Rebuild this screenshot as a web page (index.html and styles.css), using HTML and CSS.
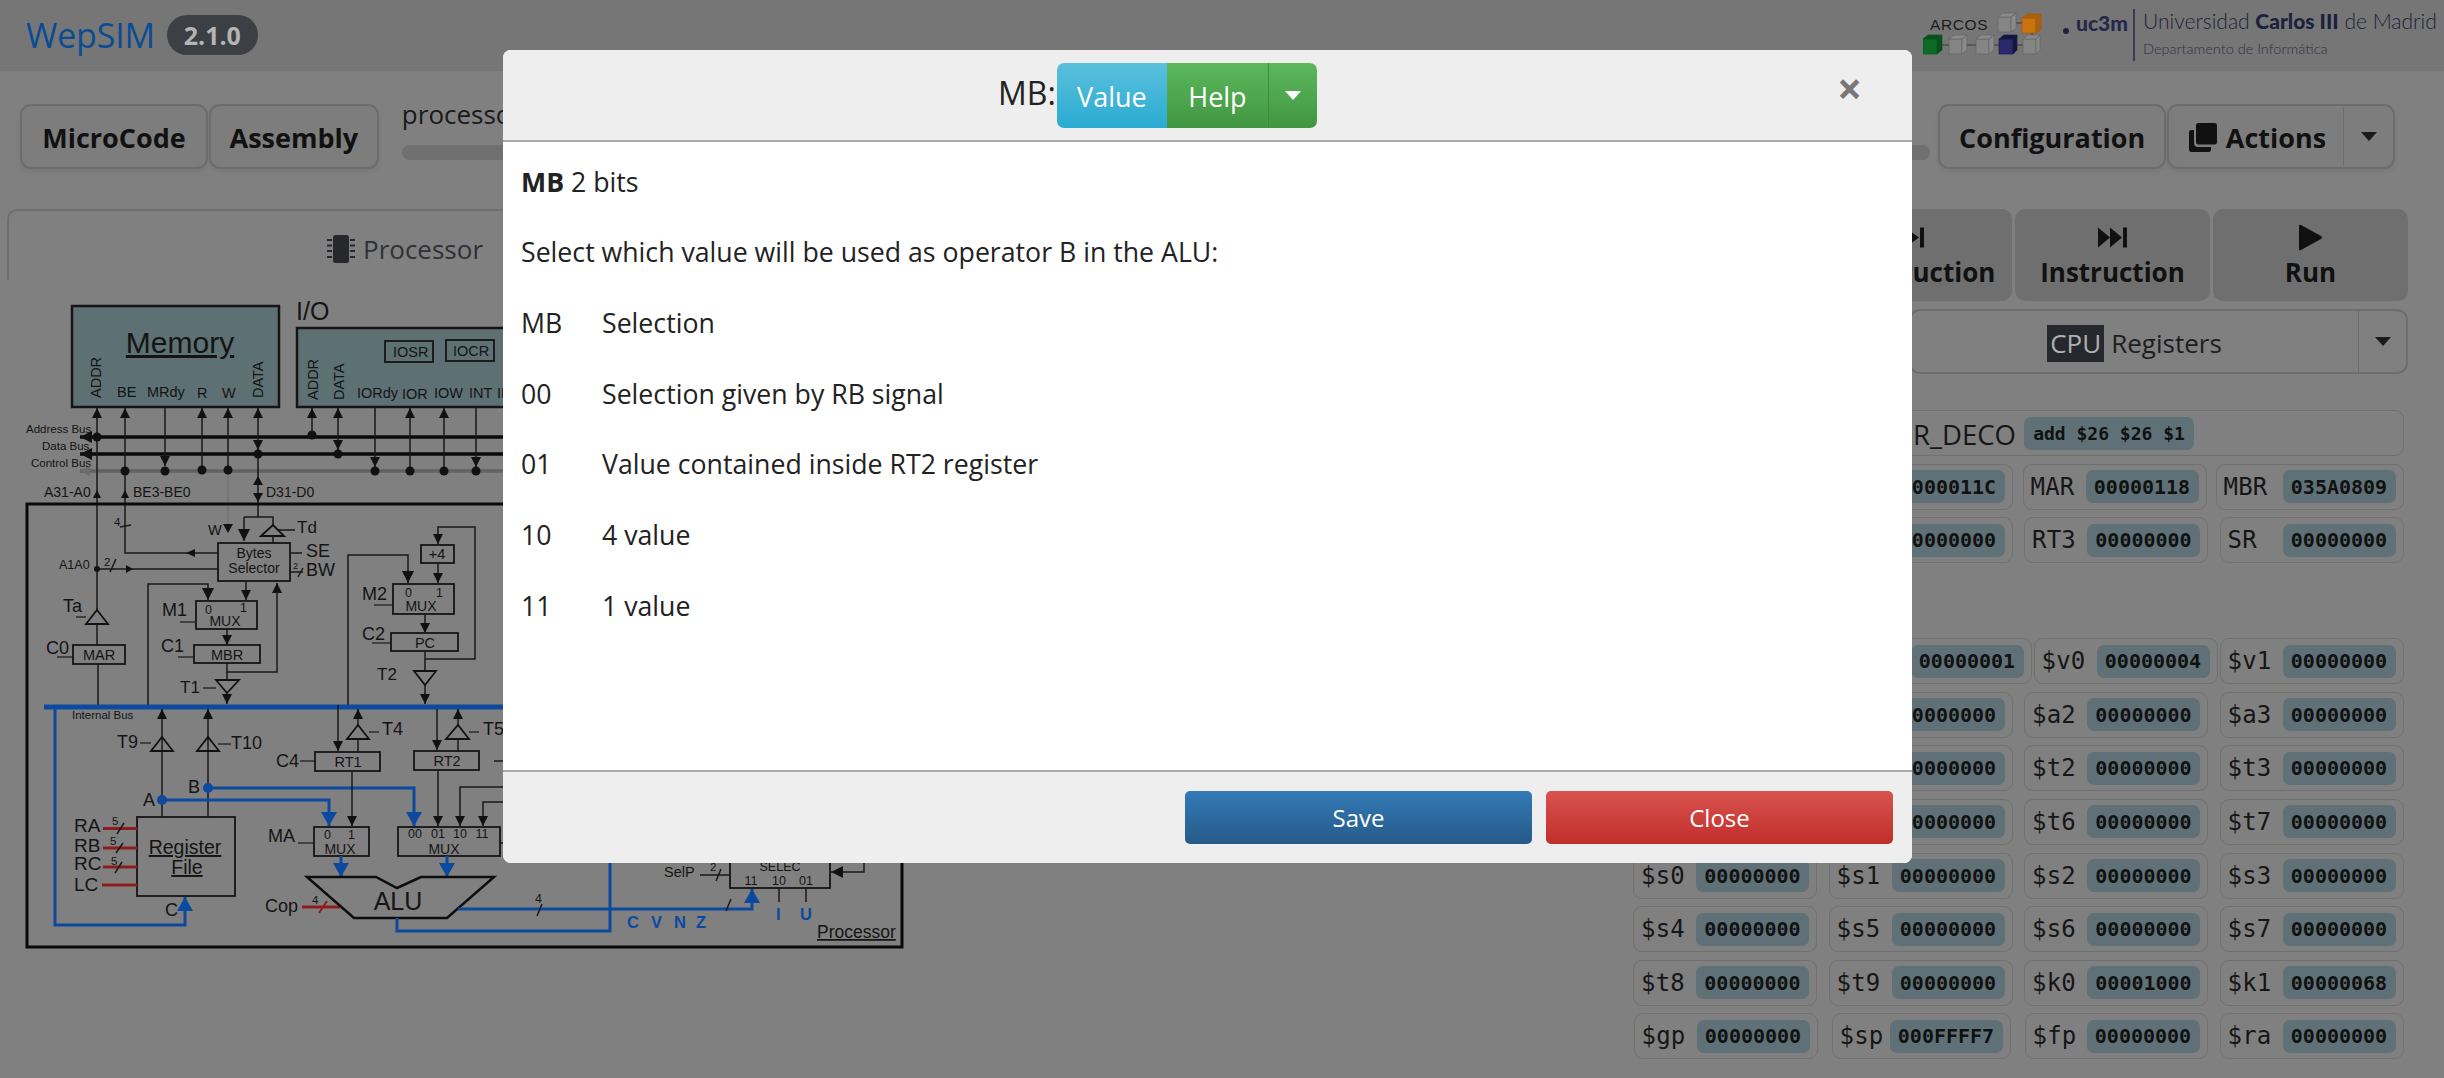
FILE: index.html
```html
<!DOCTYPE html>
<html lang="en">
<head>
<meta charset="utf-8">
<title>WepSIM</title>
<link rel="stylesheet" href="styles.css">
</head>
<body>
<div class="app">
  <header class="topbar">
    <div class="brand"><span class="brand-name">WepSIM</span><span class="version">2.1.0</span></div>
    <div class="logos">
      <svg class="arcos" viewBox="0 0 124 60" width="124" height="60">
        <text class="arcos-text" x="7" y="28">ARCOS</text>
        <g class="cube-links"><path d="M93 21h6M19 43h7M44 43h9M71 43h5M94 43h6M109 31v4"/></g>
        <g class="cube c-gray"><rect x="75" y="15" width="13" height="15"/><path d="M75 15l5-4h13l-5 4zM88 15l5-4v15l-5 4z"/></g>
        <g class="cube c-orange"><rect x="99" y="16" width="14" height="15"/><path d="M99 16l5-4h14l-5 4zM113 16l5-4v15l-5 4z"/></g>
        <g class="cube c-green"><rect x="0" y="37" width="14" height="15"/><path d="M0 37l5-4h14l-5 4zM14 37l5-4v15l-5 4z"/></g>
        <g class="cube c-gray"><rect x="26" y="37" width="13" height="15"/><path d="M26 37l5-4h13l-5 4zM39 37l5-4v15l-5 4z"/></g>
        <g class="cube c-gray"><rect x="53" y="37" width="13" height="15"/><path d="M53 37l5-4h13l-5 4zM66 37l5-4v15l-5 4z"/></g>
        <g class="cube c-navy"><rect x="76" y="37" width="14" height="15"/><path d="M76 37l5-4h13l-4 4zM90 37l4-4v15l-4 4z"/></g>
        <g class="cube c-gray"><rect x="100" y="37" width="13" height="15"/><path d="M100 37l5-4h12l-4 4zM113 37l4-4v15l-4 4z"/></g>
      </svg>
      <span class="uc-dot"></span>
      <span class="uc3m">uc3m</span>
      <span class="uc-rule"></span>
      <div class="uni">
        <div class="uni-name">Universidad <b>Carlos III</b> de Madrid</div>
        <div class="uni-dept">Departamento de Informática</div>
      </div>
    </div>
  </header>

  <div class="toolbar">
    <button class="btn">MicroCode</button>
    <button class="btn btn-asm">Assembly</button>
    <div class="progress-wrap">
      <div class="progress-label">processor</div>
      <div class="progress"></div>
    </div>
    <button class="btn btn-conf">Configuration</button>
    <div class="btn split">
      <span class="split-main">
        <svg class="icon-copy" viewBox="0 0 28 29" width="28" height="29"><path d="M7 2.500a2.500 2.500 0 0 1 2.500-2.500H25.500a2.500 2.500 0 0 1 2.500 2.500V19a2.500 2.500 0 0 1-2.500 2.500H9.500A2.500 2.500 0 0 1 7 19z"/><path d="M0 9.500A2.500 2.500 0 0 1 2.500 7H5V20a4 4 0 0 0 4 4h13v2.500a2.500 2.500 0 0 1-2.500 2.500H2.500A2.500 2.500 0 0 1 0 26.500z"/></svg>
        Actions
      </span>
      <span class="split-caret"><i class="caret"></i></span>
    </div>
  </div>

  <div class="workspace">
    <section class="left">
      <div class="tab">
        <svg class="icon-chip" viewBox="0 0 28 28" width="28" height="28"><rect x="6" y="0" width="16" height="28" rx="2.500"/><path class="pins" d="M0 5h5M0 10.500h5M0 16h5M0 22h5M23 5h5M23 10.500h5M23 16h5M23 22h5"/></svg>
        <span>Processor</span>
      </div>
      <svg class="diagram" viewBox="0 280 910 680" width="910" height="680">
        <defs>
          <marker id="ah" class="mk" markerUnits="userSpaceOnUse" markerWidth="13" markerHeight="12" refX="12" refY="6" orient="auto-start-reverse"><path d="M0 0L12 6L0 12z"/></marker>
          <marker id="as" class="mk" markerUnits="userSpaceOnUse" markerWidth="11" markerHeight="10" refX="10" refY="5" orient="auto-start-reverse"><path d="M0 0L10 5L0 10z"/></marker>
          <marker id="ab" class="mkb" markerUnits="userSpaceOnUse" markerWidth="15" markerHeight="16" refX="14" refY="8" orient="auto"><path d="M0 0L14 8L0 16z"/></marker>
        </defs>

        <rect class="box teal thick" x="72" y="306" width="207" height="101"/>
        <rect class="box teal thick" x="297" y="328" width="260" height="79"/>
        <rect class="box teal" x="385" y="341" width="48" height="21"/>
        <rect class="box teal" x="446" y="340" width="48" height="21"/>
        <text class="t s30 ul" x="180" y="353" text-anchor="middle">Memory</text>
        <text class="t s24" x="296" y="320">I/O</text>
        <text class="t s14" x="393" y="357">IOSR</text>
        <text class="t s14" x="453" y="356">IOCR</text>
        <text class="t s14" transform="translate(101 398) rotate(-90)">ADDR</text>
        <text class="t s14" transform="translate(263 398) rotate(-90)">DATA</text>
        <text class="t s14" transform="translate(318 400) rotate(-90)">ADDR</text>
        <text class="t s14" transform="translate(344 400) rotate(-90)">DATA</text>
        <text class="t s14" x="117" y="397">BE</text>
        <text class="t s14" x="147" y="397">MRdy</text>
        <text class="t s14" x="197" y="398">R</text>
        <text class="t s14" x="222" y="398">W</text>
        <text class="t s14" x="357" y="398">IORdy</text>
        <text class="t s14" x="402" y="399">IOR</text>
        <text class="t s14" x="434" y="398">IOW</text>
        <text class="t s14" x="469" y="398">INT</text>
        <text class="t s14" x="497" y="398">IN</text>

        <text class="t s10" x="26" y="433">Address Bus</text>
        <text class="t s10" x="42" y="450">Data Bus</text>
        <text class="t s10" x="31" y="467">Control Bus</text>
        <path class="bus" marker-start="url(#ah)" d="M80 437H520"/>
        <path class="bus" marker-start="url(#ah)" d="M80 454H520"/>
        <path class="bus gray" d="M80 471H520"/>
        <path class="bus-head" d="M80 471l10-5v10z"/>

        <path class="l" marker-start="url(#as)" d="M97 408V610"/>
        <path class="l" marker-start="url(#as)" d="M125 408V553H218"/>
        <path class="l" marker-end="url(#as)" d="M165 408V466"/>
        <path class="l" marker-start="url(#as)" d="M202 408V471"/>
        <path class="l" marker-start="url(#as)" d="M228 408V471"/>
        <path class="l faint" d="M228 471V528"/>
        <path class="l" marker-start="url(#as)" marker-end="url(#as)" d="M258 408V450"/>
        <path class="l" d="M258 450V517"/>
        <path class="l" marker-start="url(#as)" d="M312 408V437"/>
        <path class="l" marker-start="url(#as)" marker-end="url(#as)" d="M338 408V450"/>
        <path class="l" marker-end="url(#as)" d="M375 407V467"/>
        <path class="l" marker-start="url(#as)" d="M410 408V471"/>
        <path class="l" marker-start="url(#as)" d="M444 408V471"/>
        <path class="l" marker-end="url(#as)" d="M476 407V467"/>
        <g class="dots">
          <circle cx="97" cy="437" r="4.500"/><circle cx="312" cy="435" r="4.500"/><circle cx="258" cy="454" r="4.500"/><circle cx="338" cy="454" r="4.500"/>
          <circle cx="125" cy="471" r="4.500"/><circle cx="165" cy="471" r="4.500"/><circle cx="202" cy="470" r="4.500"/><circle cx="228" cy="470" r="4.500"/>
          <circle cx="375" cy="471" r="4.500"/><circle cx="410" cy="471" r="4.500"/><circle cx="444" cy="471" r="4.500"/><circle cx="476" cy="471" r="4.500"/>
          <circle cx="97" cy="569" r="3"/>
        </g>
        <text class="t s13" x="44" y="497">A31-A0</text>
        <text class="t s13" x="133" y="497">BE3-BE0</text>
        <text class="t s13" x="266" y="497">D31-D0</text>
        <path class="l-none ah-fill" d="M97 490l-4 8h8zM125 490l-4 8h8zM258 476l-5 9h10zM258 502l-5-9h10z"/>

        <rect class="frame" x="27" y="504" width="875" height="443"/>

        <path class="l" d="M244 517H273V525"/>
        <path class="l" marker-end="url(#ah)" d="M244 517V541"/>
        <path class="tri" d="M261 536L273 525L284 536z"/>
        <path class="l" d="M273 536V543M278 530H295M290 553H302"/>
        <text class="t s15" x="297" y="533">Td</text>
        <text class="t s14" x="208" y="535">W</text>
        <path class="ah-fill" d="M223 524h10l-5 9z"/>
        <rect class="box" x="218" y="543" width="72" height="38"/>
        <text class="t s13" x="254" y="558" text-anchor="middle">Bytes</text>
        <text class="t s13" x="254" y="573" text-anchor="middle">Selector</text>
        <text class="t s16" x="306" y="557">SE</text>
        <text class="t s16" x="306" y="576">BW</text>
        <text class="t s9" x="293" y="569">2</text>
        <path class="l" d="M290 572H303M298 577L303 568"/>
        <path class="ah-fill" d="M186 553l9-4v8z"/>
        <text class="t s12" x="59" y="569">A1A0</text>
        <path class="l" d="M97 569H218M110 572L116 559M120 527L131 525"/>
        <text class="t s10" x="104" y="566">2</text>
        <text class="t s10" x="114" y="526">4</text>
        <path class="ah-fill" d="M133 569l-7-4v8z"/>

        <path class="l" marker-end="url(#ah)" d="M148 705V584H208V600"/>
        <path class="l" marker-end="url(#as)" d="M246 581V600"/>
        <rect class="box" x="196" y="601" width="61" height="28"/>
        <text class="t s12" x="205" y="614">0</text><text class="t s12" x="240" y="612">1</text>
        <text class="t s13" x="225" y="626" text-anchor="middle">MUX</text>
        <text class="t s16" x="162" y="616">M1</text>
        <path class="l gl" d="M180 622H196M178 657H194M57 657H73M76 617H86M203 688H216M374 605H393M372 643H391M140 743H151M218 744H231M369 732H379M469 732H479M300 761H315M298 843H314"/>
        <path class="l" marker-end="url(#as)" d="M227 629V645"/>
        <rect class="box" x="194" y="645" width="66" height="18"/>
        <text class="t s14" x="227" y="660" text-anchor="middle">MBR</text>
        <text class="t s16" x="161" y="652">C1</text>
        <path class="l" marker-end="url(#as)" d="M227 663V672H277V583"/>
        <path class="l" d="M227 672V680"/>
        <path class="tri" d="M216 680H239L227 693z"/>
        <text class="t s15" x="180" y="693">T1</text>
        <path class="l" marker-end="url(#as)" d="M227 693V704"/>

        <path class="tri" d="M86 624L97 610L108 624z"/>
        <text class="t s16" x="63" y="612">Ta</text>
        <path class="l" d="M97 624V645M98 664V705"/>
        <rect class="box" x="73" y="645" width="52" height="19"/>
        <text class="t s14" x="99" y="660" text-anchor="middle">MAR</text>
        <text class="t s16" x="46" y="654">C0</text>

        <rect class="box" x="421" y="545" width="33" height="18"/>
        <text class="t s14" x="437" y="559" text-anchor="middle">+4</text>
        <path class="l" marker-end="url(#as)" d="M425 659H475V527H438V544"/>
        <path class="l" marker-end="url(#as)" d="M438 563V583"/>
        <path class="l" marker-end="url(#ah)" d="M348 705V555H408V583"/>
        <rect class="box" x="393" y="584" width="61" height="30"/>
        <text class="t s12" x="405" y="597">0</text><text class="t s12" x="436" y="597">1</text>
        <text class="t s13" x="421" y="611" text-anchor="middle">MUX</text>
        <text class="t s16" x="362" y="600">M2</text>
        <path class="l" marker-end="url(#as)" d="M425 614V633"/>
        <rect class="box" x="391" y="633" width="67" height="18"/>
        <text class="t s14" x="425" y="648" text-anchor="middle">PC</text>
        <text class="t s16" x="362" y="640">C2</text>
        <path class="l" d="M425 651V671"/>
        <path class="tri" d="M414 671H436L425 685z"/>
        <text class="t s15" x="377" y="680">T2</text>
        <path class="l" marker-end="url(#as)" d="M425 685V704"/>

        <path class="bluel wide" d="M44 707H520"/>
        <path class="bluel" marker-end="url(#ab)" d="M55 707V925H185V897"/>
        <text class="t s11" x="72" y="719">Internal Bus</text>
        <text class="t s16" x="165" y="916">C</text>

        <path class="l" marker-end="url(#as)" d="M162 817V709"/>
        <path class="l" marker-end="url(#as)" d="M208 817V709"/>
        <path class="tri" d="M151 751L162 737L173 751z"/>
        <path class="tri" d="M197 751L208 737L219 751z"/>
        <text class="t s16" x="117" y="748">T9</text>
        <text class="t s16" x="231" y="749">T10</text>
        <path class="bluel" marker-end="url(#ab)" d="M162 800H329V826"/>
        <path class="bluel" marker-end="url(#ab)" d="M208 788H414V826"/>
        <circle class="bdot" cx="162" cy="800" r="5"/>
        <circle class="bdot" cx="208" cy="788" r="5"/>
        <text class="t s16" x="143" y="806">A</text>
        <text class="t s16" x="188" y="793">B</text>
        <rect class="box" x="137" y="817" width="98" height="79"/>
        <text class="t s19 ul" x="185" y="854" text-anchor="middle">Register</text>
        <text class="t s19 ul" x="187" y="874" text-anchor="middle">File</text>
        <text class="t s17" x="74" y="832">RA</text>
        <text class="t s17" x="74" y="852">RB</text>
        <text class="t s17" x="74" y="870">RC</text>
        <text class="t s17" x="74" y="891">LC</text>
        <path class="redl" d="M103 828.500H137M103 848H137M103 867H137M102 885H137M302 907H340"/>
        <path class="l" d="M117 834L124 823M116 853L123 843M115 873L122 862"/>
        <path class="redl thin" d="M319 913L327 901"/>
        <text class="t s11" x="112" y="825">5</text>
        <text class="t s11" x="110" y="845">5</text>
        <text class="t s11" x="111" y="865">5</text>
        <text class="t s11" x="312" y="904">4</text>

        <rect class="box" x="315" y="752" width="65" height="19"/>
        <text class="t s14" x="348" y="767" text-anchor="middle">RT1</text>
        <text class="t s16" x="276" y="767">C4</text>
        <path class="l" marker-end="url(#as)" d="M338 705V751"/>
        <path class="l" d="M358 739V752"/>
        <path class="tri" d="M347 739L358 725L369 739z"/>
        <path class="l" marker-end="url(#as)" d="M358 725V709"/>
        <text class="t s16" x="382" y="735">T4</text>
        <path class="l" marker-end="url(#as)" d="M352 771V826"/>

        <rect class="box" x="414" y="751" width="65" height="19"/>
        <text class="t s14" x="447" y="766" text-anchor="middle">RT2</text>
        <path class="l" marker-end="url(#as)" d="M437 709V750"/>
        <path class="l" d="M458 739V751"/>
        <path class="tri" d="M446 739L458 725L469 739z"/>
        <path class="l" marker-end="url(#as)" d="M458 725V709"/>
        <text class="t s16" x="483" y="735">T5</text>
        <path class="l" d="M494 761H503"/>
        <path class="l" marker-end="url(#as)" d="M438 771V826"/>
        <path class="l" marker-end="url(#as)" d="M503 787H460V826"/>
        <path class="l" marker-end="url(#as)" d="M503 802H483V826"/>

        <rect class="box" x="314" y="827" width="55" height="29"/>
        <text class="t s12" x="324" y="839">0</text><text class="t s12" x="348" y="839">1</text>
        <text class="t s13" x="340" y="854" text-anchor="middle">MUX</text>
        <text class="t s16" x="268" y="842">MA</text>
        <rect class="box" x="398" y="827" width="102" height="29"/>
        <text class="t s12" x="415" y="838" text-anchor="middle">00</text>
        <text class="t s12" x="438" y="838" text-anchor="middle">01</text>
        <text class="t s12" x="460" y="838" text-anchor="middle">10</text>
        <text class="t s12" x="482" y="838" text-anchor="middle">11</text>
        <text class="t s13" x="444" y="854" text-anchor="middle">MUX</text>
        <path class="l" d="M500 843H520"/>
        <path class="bluel" marker-end="url(#ab)" d="M341 856V877"/>
        <path class="bluel" marker-end="url(#ab)" d="M447 856V877"/>

        <path class="alu" d="M307 877H376L397 888L421 877H494L447 918H354z"/>
        <text class="t s24" x="398" y="910" text-anchor="middle">ALU</text>
        <text class="t s16" x="265" y="912">Cop</text>

        <path class="bluel" d="M397 918V931H610V800"/>
        <path class="bluel" marker-end="url(#ab)" d="M458 909H752V889"/>
        <text class="t s12" x="535" y="903">4</text>
        <path class="l" d="M537 916L542 904M726 911L731 899"/>
        <rect class="box" x="730" y="840" width="100" height="48"/>
        <text class="t s12" x="780" y="871" text-anchor="middle">SELEC</text>
        <text class="t s12" x="751" y="885" text-anchor="middle">11</text>
        <text class="t s12" x="779" y="885" text-anchor="middle">10</text>
        <text class="t s12" x="806" y="885" text-anchor="middle">01</text>
        <text class="t s14" x="664" y="877">SelP</text>
        <text class="t s11" x="710" y="871">2</text>
        <path class="l" d="M700 875H730M716 881L721 869"/>
        <path class="l" marker-end="url(#ah)" d="M864 860V872H831"/>
        <path class="l" d="M779 888V902M806 888V902"/>
        <text class="blue-t" x="776" y="920">I</text>
        <text class="blue-t" x="800" y="920">U</text>
        <text class="blue-t" x="627" y="928">C</text>
        <text class="blue-t" x="651" y="928">V</text>
        <text class="blue-t" x="674" y="928">N</text>
        <text class="blue-t" x="696" y="928">Z</text>
        <text class="t s15b ul" x="817" y="938">Processor</text>
      </svg>
    </section>

    <aside class="right">
      <div class="steps">
        <button class="step">Reset</button>
        <button class="step">
          <svg class="step-icon" viewBox="0 0 20 22" width="20" height="22"><path d="M0 1l14 10L0 21zM15 1h4v20h-4z"/></svg>
          <span>μInstruction</span>
        </button>
        <button class="step">
          <svg class="step-icon" viewBox="0 0 29 22" width="29" height="22"><path d="M0 1l12 10L0 21zM12 1l12 10-12 10zM25 1h4v20h-4z"/></svg>
          <span>Instruction</span>
        </button>
        <button class="step">
          <svg class="step-icon" viewBox="0 0 25 27" width="25" height="27"><path d="M1 2q0-2 2-1l20 11q2 1.500 0 3L3 26q-2 1-2-1z"/></svg>
          <span>Run</span>
        </button>
      </div>
      <div class="select">
        <span class="select-main"><span class="cpu">CPU</span> Registers</span>
        <span class="select-caret"><i class="caret"></i></span>
      </div>
      <div class="regs">
        <div class="chip chip-wide"><span class="lbl lbl-deco">IR_DECO</span><span class="val val-auto">add $26 $26 $1</span></div>
        <div class="row row-ctl1">
          <div class="chip chip-pc"><span class="lbl">PC</span><span class="val">0000011C</span></div>
          <div class="chip"><span class="lbl">MAR</span><span class="val">00000118</span></div>
          <div class="chip chip-mbr"><span class="lbl">MBR</span><span class="val">035A0809</span></div>
        </div>
        <div class="row">
          <div class="chip"><span class="lbl">RT1</span><span class="val">00000000</span></div>
          <div class="chip"><span class="lbl">RT2</span><span class="val">00000000</span></div>
          <div class="chip"><span class="lbl">RT3</span><span class="val">00000000</span></div>
          <div class="chip"><span class="lbl">SR</span><span class="val">00000000</span></div>
        </div>
      </div>
      <div class="regs regs-bank">
        <div class="row row-tight">
          <div class="chip"><span class="lbl">$zero</span><span class="val">00000000</span></div>
          <div class="chip"><span class="lbl">$at</span><span class="val">00000001</span></div>
          <div class="chip"><span class="lbl">$v0</span><span class="val">00000004</span></div>
          <div class="chip"><span class="lbl">$v1</span><span class="val">00000000</span></div>
        </div>
        <div class="row">
          <div class="chip"><span class="lbl">$a0</span><span class="val">00000000</span></div>
          <div class="chip"><span class="lbl">$a1</span><span class="val">00000000</span></div>
          <div class="chip"><span class="lbl">$a2</span><span class="val">00000000</span></div>
          <div class="chip"><span class="lbl">$a3</span><span class="val">00000000</span></div>
        </div>
        <div class="row">
          <div class="chip"><span class="lbl">$t0</span><span class="val">00000000</span></div>
          <div class="chip"><span class="lbl">$t1</span><span class="val">00000000</span></div>
          <div class="chip"><span class="lbl">$t2</span><span class="val">00000000</span></div>
          <div class="chip"><span class="lbl">$t3</span><span class="val">00000000</span></div>
        </div>
        <div class="row">
          <div class="chip"><span class="lbl">$t4</span><span class="val">00000000</span></div>
          <div class="chip"><span class="lbl">$t5</span><span class="val">00000000</span></div>
          <div class="chip"><span class="lbl">$t6</span><span class="val">00000000</span></div>
          <div class="chip"><span class="lbl">$t7</span><span class="val">00000000</span></div>
        </div>
        <div class="row">
          <div class="chip"><span class="lbl">$s0</span><span class="val">00000000</span></div>
          <div class="chip"><span class="lbl">$s1</span><span class="val">00000000</span></div>
          <div class="chip"><span class="lbl">$s2</span><span class="val">00000000</span></div>
          <div class="chip"><span class="lbl">$s3</span><span class="val">00000000</span></div>
        </div>
        <div class="row">
          <div class="chip"><span class="lbl">$s4</span><span class="val">00000000</span></div>
          <div class="chip"><span class="lbl">$s5</span><span class="val">00000000</span></div>
          <div class="chip"><span class="lbl">$s6</span><span class="val">00000000</span></div>
          <div class="chip"><span class="lbl">$s7</span><span class="val">00000000</span></div>
        </div>
        <div class="row">
          <div class="chip"><span class="lbl">$t8</span><span class="val">00000000</span></div>
          <div class="chip"><span class="lbl">$t9</span><span class="val">00000000</span></div>
          <div class="chip"><span class="lbl">$k0</span><span class="val">00001000</span></div>
          <div class="chip"><span class="lbl">$k1</span><span class="val">00000068</span></div>
        </div>
        <div class="row row-last">
          <div class="chip"><span class="lbl">$gp</span><span class="val">00000000</span></div>
          <div class="chip chip-sp"><span class="lbl">$sp</span><span class="val">000FFFF7</span></div>
          <div class="chip chip-fp"><span class="lbl">$fp</span><span class="val">00000000</span></div>
          <div class="chip"><span class="lbl">$ra</span><span class="val">00000000</span></div>
        </div>
      </div>
    </aside>
  </div>

  <div class="modal">
    <div class="modal-head">
      <div class="modal-title">
        <span class="modal-name">MB:</span>
        <div class="mgroup">
          <span class="mbtn m-info">Value</span>
          <span class="mbtn m-ok">Help</span>
          <span class="mbtn m-ok m-drop"><i class="caret caret-w"></i></span>
        </div>
      </div>
      <div class="modal-x">×</div>
    </div>
    <div class="modal-body">
      <p class="line"><b>MB</b> 2 bits</p>
      <p class="line">Select which value will be used as operator B in the ALU:</p>
      <p class="line cols"><span>MB</span><span>Selection</span></p>
      <p class="line cols"><span>00</span><span>Selection given by RB signal</span></p>
      <p class="line cols"><span>01</span><span>Value contained inside RT2 register</span></p>
      <p class="line cols"><span>10</span><span>4 value</span></p>
      <p class="line cols"><span>11</span><span>1 value</span></p>
    </div>
    <div class="modal-foot">
      <button class="fbtn f-save">Save</button>
      <button class="fbtn f-close">Close</button>
    </div>
  </div>
</div>
</body>
</html>
```

FILE: styles.css
```css
* { box-sizing: border-box; }
html, body { margin: 0; padding: 0; }
body { font-family: "Open Sans", "Noto Sans", sans-serif; color: #111; background: #808080; }
button { font-family: inherit; }
.app { position: relative; width: 2444px; height: 1078px; overflow: hidden; background: #808080; }

/* header */
.topbar { height: 71px; background: #767676; display: flex; justify-content: space-between; align-items: center; padding: 0 30px 0 26px; }
.brand { display: flex; align-items: center; gap: 12px; margin-top: -2px; }
.brand-name { font-size: 34px; color: #0a4c94; letter-spacing: -0.2px; }
.version { width: 91px; height: 40px; border-radius: 20px; background: #3c3f44; color: #b4b4b4; font-weight: 700; font-size: 25px; display: flex; align-items: center; justify-content: center; }
.logos { display: flex; align-items: center; }
.arcos { display: block; margin-right: 16px; margin-bottom: 8px; }
.arcos-text { font-family: "Liberation Sans", sans-serif; font-size: 15.500px; fill: #1c1c1c; letter-spacing: .6px; }
.cube-links path { stroke: #4d4d4d; stroke-width: 1.500; fill: none; }
.cube rect, .cube path { stroke-width: .7; }
.c-gray rect { fill: #858585; stroke: #666; } .c-gray path { fill: #8a8a8a; stroke: #666; }
.c-orange rect { fill: #c9730f; stroke: #a55c09; } .c-orange path { fill: #a96010; stroke: #a55c09; }
.c-green rect { fill: #0e6a26; stroke: #0a5a1e; } .c-green path { fill: #0a4e1b; stroke: #0a5a1e; }
.c-navy rect { fill: #29296b; stroke: #1c1c50; } .c-navy path { fill: #14143c; stroke: #1c1c50; }
.uc-dot { width: 6px; height: 6px; border-radius: 50%; background: #1f2040; margin: -10px 7px 0 0; }
.uc3m { font-family: "Lato", sans-serif; font-weight: 900; font-size: 21px; line-height: 26px; color: #26274a; margin-bottom: 26px; width: 57px; }
.uc-rule { width: 2px; height: 52px; background: #383a58; margin-right: 8px; margin-bottom: 2px; }
.uni { display: flex; flex-direction: column; gap: 4px; color: #1e1f3c; font-family: "Lato", sans-serif; margin-bottom: 6px; width: 271px; }
.uni-name { font-size: 21px; font-weight: 300; line-height: 28px; white-space: nowrap; }
.uni-name b { font-weight: 900; }
.uni-dept { font-size: 14.500px; font-weight: 300; line-height: 20px; color: #2e3048; white-space: nowrap; }

/* toolbar */
.toolbar { display: flex; height: 65px; margin-top: 33px; padding-left: 20px; padding-right: 49px; }
.btn { height: 65px; border: 2px solid #6d6d6d; border-radius: 11px; background: #7d7d7d; font-size: 27px; font-weight: 700; color: #111; padding: 2px 0 0; box-shadow: 0 3px 5px rgba(0,0,0,.07); width: 188px; margin-right: 1px; display: flex; align-items: center; justify-content: center; }
.btn-asm { width: 170px; }
.progress-wrap { width: 1529px; margin: 0 8px 0 22px; }
.progress-label { font-size: 26px; line-height: 36px; margin-top: -8px; color: #1a1a1a; }
.progress { height: 15px; border-radius: 8px; background: #707070; margin-top: 13px; }
.btn-conf { width: 228px; }
.split { width: 228px; margin: 0; }
.split-main { flex: 1; display: flex; align-items: center; justify-content: center; gap: 9px; padding-left: 3px; }
.split-caret { width: 50px; height: 100%; margin-top: -2px; border-left: 1px solid #6d6d6d; display: flex; align-items: center; justify-content: center; }
.icon-copy path { fill: #111; }
.caret { display: block; width: 0; height: 0; border-style: solid; border-width: 9px 8px 0; border-color: #1a1a1a transparent transparent; }

/* workspace */
.workspace { display: flex; margin-top: 40px; }
.left { width: 1616px; flex: none; }
.tab { height: 71px; margin-left: 7px; border: 2px solid #6f6f6f; border-bottom: 0; border-radius: 10px 10px 0 0; display: flex; align-items: flex-start; padding: 21px 0 0 318px; gap: 8px; color: #2f3135; font-size: 26px; line-height: 34px; }
.icon-chip { flex: none; margin-top: 3px; }
.icon-chip rect { fill: #26282c; }
.icon-chip .pins { stroke: #26282c; stroke-width: 2; fill: none; }
.diagram { display: block; }

.t { font-family: "Liberation Sans", sans-serif; fill: #141414; }
.s9 { font-size: 9px; } .s10 { font-size: 11.500px; } .s11 { font-size: 11.500px; } .s12 { font-size: 12.500px; }
.s13 { font-size: 14px; } .s14 { font-size: 14.500px; } .s15 { font-size: 17px; } .s15b { font-size: 17.500px; } .s16 { font-size: 18px; }
.s17 { font-size: 19px; } .s19 { font-size: 19.500px; } .s24 { font-size: 25px; } .s30 { font-size: 30px; }
.ul { text-decoration: underline; }
.box { fill: none; stroke: #151515; stroke-width: 1.800; }
.teal { fill: #5d7073; }
.thick { stroke-width: 2.500; }
.frame { fill: none; stroke: #0a0a0a; stroke-width: 3; }
.l { fill: none; stroke: #191919; stroke-width: 1.500; }
.gl { stroke: #2d2d2d; }
.faint { stroke: #757575; }
.bus { fill: none; stroke: #0a0a0a; stroke-width: 3.500; }
.bus.gray { stroke: #626262; }
.bus-head { fill: #6b6b6b; }
.mk path, .ah-fill, .dots circle { fill: #111; }
.mkb path { fill: #0b4a9e; }
.tri { fill: none; stroke: #111; stroke-width: 1.800; }
.bluel { fill: none; stroke: #0b4a9e; stroke-width: 3; }
.wide { stroke-width: 5; }
.bdot { fill: #0b4a9e; }
.redl { fill: none; stroke: #8f1c1c; stroke-width: 3; }
.thin { stroke-width: 2; }
.alu { fill: none; stroke: #0d0d0d; stroke-width: 2.500; }
.blue-t { font-family: "Liberation Sans", sans-serif; font-weight: 700; font-size: 16.500px; fill: #0b4a9e; }

/* right column */
.right { width: 792px; flex: none; }
.steps { display: grid; grid-template-columns: repeat(4, 195px); gap: 3px; height: 92px; margin-left: 3px; }
.step { border: 0; border-radius: 10px; background: #6f6f6f; color: #111; font-size: 26px; font-weight: 700; padding: 15px 0 0; display: flex; flex-direction: column; align-items: center; height: 92px; line-height: 36px; }
.step-icon { display: block; height: 27px; margin-bottom: 3px; }
.step-icon path { fill: #111; }
.select { display: flex; height: 65px; margin: 8px 0 0 293px; border: 2px solid #6d6d6d; border-radius: 11px; }
.select-main { flex: 1; display: flex; align-items: center; justify-content: center; gap: 7px; font-size: 26px; color: #1d1d1d; padding-top: 3px; }
.cpu { background: #25282c; color: #aeb0b2; height: 37px; line-height: 37px; padding: 0 3px; }
.select-caret { width: 48px; border-left: 1px solid #6d6d6d; display: flex; align-items: center; justify-content: center; }

.regs { margin: 36px 0 0 16px; width: 771.500px; display: flex; flex-direction: column; gap: 7.600px; }
.regs-bank { margin-top: 75px; }
.row { display: flex; justify-content: flex-end; gap: 11.500px; height: 46px; }
.row-ctl1 { gap: 9px; }
.row-tight { gap: 2px; }
.chip { width: 184px; height: 46px; flex: none; border: 1.500px solid #707070; border-radius: 9px; display: flex; align-items: center; justify-content: space-between; padding: 0 7px; }
.chip-wide { width: 100%; justify-content: flex-start; padding-left: 267px; gap: 8px; }
.chip-pc { margin-right: 1px; }
.chip-mbr { width: 188px; }
.chip-sp { width: 179px; margin: 0 2px; }
.chip-fp { width: 183px; }
.row-last { gap: 12px; }
.lbl { font-family: "DejaVu Sans Mono", monospace; font-size: 24px; color: #161616; letter-spacing: .2px; white-space: nowrap; }
.lbl-deco { font-family: "Open Sans", sans-serif; font-size: 27.500px; width: 116px; flex: none; text-align: right; letter-spacing: 0; padding-top: 2px; }
.val { width: 113px; height: 33px; border-radius: 7px; background: #5f7176; color: #111; font-family: "DejaVu Sans Mono", monospace; font-weight: 700; font-size: 20px; display: flex; align-items: center; justify-content: center; flex: none; }
.val-auto { width: 170px; font-size: 18px; }

/* modal */
.modal { position: absolute; left: 503px; top: 50px; width: 1409px; height: 813px; background: #fff; border-radius: 8px; overflow: hidden; display: flex; flex-direction: column; }
.modal-head { height: 92px; flex: none; background: #eee; border-bottom: 2px solid #aaa; display: flex; align-items: flex-start; }
.modal-title { flex: 1; display: flex; justify-content: center; padding-top: 13px; font-size: 32px; line-height: 65px; color: #222; gap: 1px; }
.modal-name { margin-top: -3px; }
.mgroup { display: flex; height: 65px; border-radius: 7px; overflow: hidden; }
.mbtn { display: flex; align-items: center; justify-content: center; color: #fff; font-size: 27px; padding-top: 2px; }
.m-info { width: 110px; background: linear-gradient(#5bc0de, #2aabd2); }
.m-ok { width: 101px; background: linear-gradient(#5cb85c, #419641); }
.m-drop { width: 49px; border-left: 1px solid #3f8a3f; padding-top: 0; }
.caret-w { border-color: #fff transparent transparent; }
.modal-x { width: 100px; padding: 16px 0 0 25px; font-size: 44px; font-weight: 700; line-height: 44px; color: #777; }
.modal-body { flex: 1; padding: 19.500px 18px 0; font-size: 26.700px; color: #222; }
.line { margin: 0 0 30.700px; line-height: 40px; }
.cols { display: flex; }
.cols span:first-child { width: 81px; flex: none; }
.modal-foot { height: 93px; flex: none; background: #eee; border-top: 2px solid #aaa; display: flex; justify-content: flex-end; gap: 14px; padding: 19px 19px 0 0; }
.fbtn { width: 347px; height: 53px; border: 0; border-radius: 5px; color: #fff; font-size: 24px; padding: 0; }
.f-save { background: linear-gradient(#337ab7, #265a88); }
.f-close { background: linear-gradient(#d9534f, #c12e2a); }
```
